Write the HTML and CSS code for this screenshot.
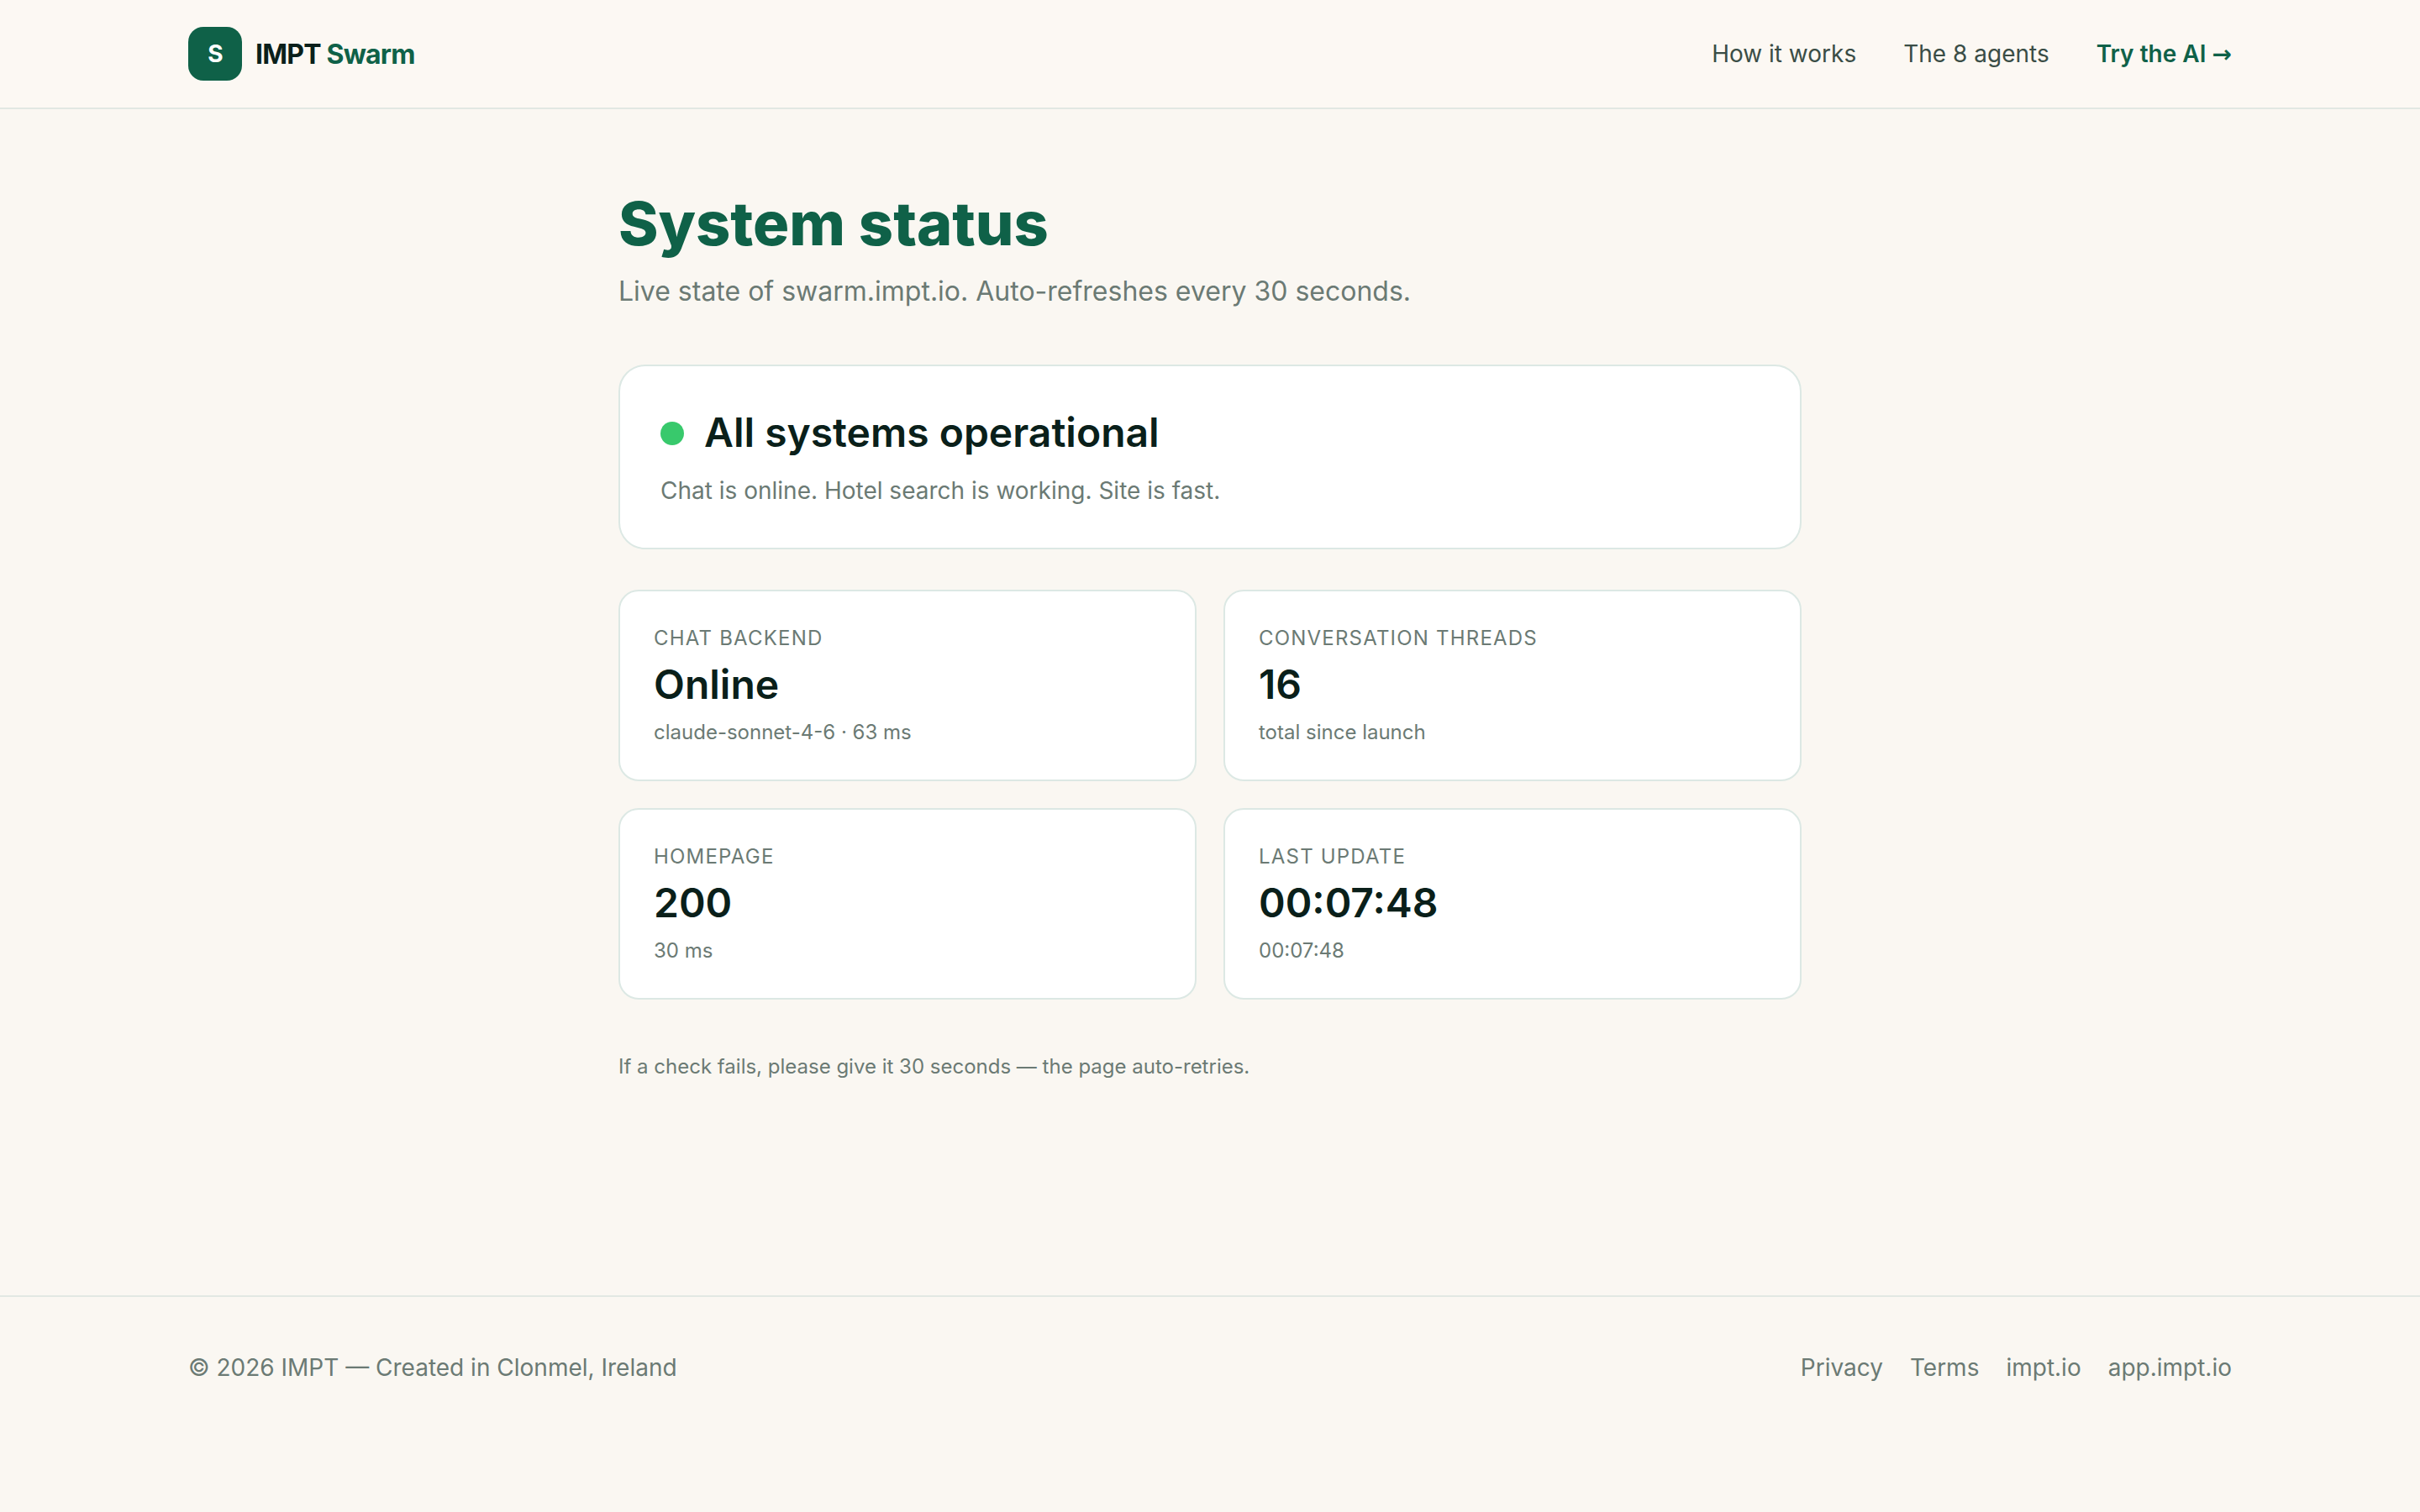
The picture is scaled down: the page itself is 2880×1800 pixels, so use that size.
FILE: index.html
```html
<!DOCTYPE html>
<html lang="en">
<head>
<meta charset="utf-8">
<title>System status — IMPT Swarm</title>
<link rel="stylesheet" href="styles.css">
</head>
<body>
<header class="site-header">
  <div class="wrap header-row">
    <a class="brand"><span class="brand-mark">S</span><span class="brand-name">IMPT <span class="accent">Swarm</span></span></a>
    <nav class="nav"><a>How it works</a><a>The 8 agents</a><a class="cta">Try the AI <span class="arrow">→</span></a></nav>
  </div>
</header>
<main class="main">
  <h1>System status</h1>
  <p class="lead">Live state of swarm.impt.io. Auto-refreshes every 30 seconds.</p>
  <section class="overall">
    <div class="overall-title"><span class="dot"></span><span>All systems operational</span></div>
    <div class="overall-text">Chat is online. Hotel search is working. Site is fast.</div>
  </section>
  <section class="grid">
    <div class="card"><div class="label">Chat backend</div><div class="value">Online</div><div class="meta">claude-sonnet-4-6 · 63 ms</div></div>
    <div class="card"><div class="label">Conversation threads</div><div class="value">16</div><div class="meta">total since launch</div></div>
    <div class="card"><div class="label">Homepage</div><div class="value">200</div><div class="meta">30 ms</div></div>
    <div class="card"><div class="label">Last update</div><div class="value">00:07:48</div><div class="meta">00:07:48</div></div>
  </section>
  <p class="note">If a check fails, please give it 30 seconds — the page auto-retries.</p>
</main>
<footer class="site-footer">
  <div class="wrap footer-row">
    <div>© 2026 IMPT — Created in Clonmel, Ireland</div>
    <nav class="footer-links"><a>Privacy</a><a>Terms</a><a>impt.io</a><a>app.impt.io</a></nav>
  </div>
</footer>
</body>
</html>
```
FILE: styles.css
```css
* { box-sizing: border-box; margin: 0; padding: 0; }
body { background: #faf7f2; color: #0a1f1a; font-family: Inter, "Liberation Sans", sans-serif; font-size: 32px; line-height: 1.6; min-height: 1800px; }
.wrap { width: 2432px; margin: 0 auto; }
.site-header { height: 130px; border-bottom: 2px solid #e2e8e3; background: #fcf8f3; backdrop-filter: blur(16px); }
.header-row { height: 128px; display: flex; align-items: center; justify-content: space-between; }
.brand { display: flex; align-items: center; gap: 16px; font-size: 32px; font-weight: 700; letter-spacing: -0.8px; }
.brand-mark { width: 64px; height: 64px; border-radius: 18px; background: #0f6148; color: #fff; display: flex; align-items: center; justify-content: center; font-size: 28px; }
.brand-name { padding-top: 1px; }
.accent { color: #0f6148; }
.nav { display: flex; gap: 56px; font-size: 28px; line-height: 44px; color: #3a4d46; }
.cta { color: #0f6148; font-weight: 600; }
.arrow { font-family: "DejaVu Sans", sans-serif; line-height: 1; }
.main { width: 1408px; margin: 0 auto; height: 1412px; padding-top: 96px; }
h1 { font-size: 72px; line-height: 79px; font-weight: 800; color: #0f6148; }
.lead { font-size: 32px; line-height: 53px; margin-top: 15px; color: #6b7a74; }
.overall { margin-top: 61px; height: 220px; background: #fff; border: 2px solid #dce8e4; border-radius: 32px; padding: 48px; }
.overall-title { display: flex; align-items: center; gap: 24px; font-size: 48px; font-weight: 600; line-height: 61px; }
.dot { width: 28px; height: 28px; margin-top: 3px; border-radius: 50%; background: #38c96c; }
.overall-text { margin-top: 17px; font-size: 28px; line-height: 44px; color: #6b7a74; }
.grid { margin-top: 48px; display: grid; grid-template-columns: 1fr 1fr; gap: 32px; }
.card { height: 228px; background: #fff; border: 2px solid #dce8e4; border-radius: 24px; padding: 36px 40px; }
.label { font-size: 24px; line-height: 39px; letter-spacing: 1.2px; text-transform: uppercase; color: #6b7a74; }
.value { font-size: 48px; font-weight: 600; line-height: 71px; }
.meta { margin-top: 1px; font-size: 24px; line-height: 41px; color: #6b7a74; }
.note { margin-top: 59px; font-size: 24px; line-height: 41px; color: #6b7a74; }
.site-footer { border-top: 2px solid #e2e8e3; padding-top: 60px; font-size: 28px; line-height: 48px; color: #6b7a74; }
.footer-row { display: flex; justify-content: space-between; }
.footer-links { display: flex; gap: 32px; }
```
